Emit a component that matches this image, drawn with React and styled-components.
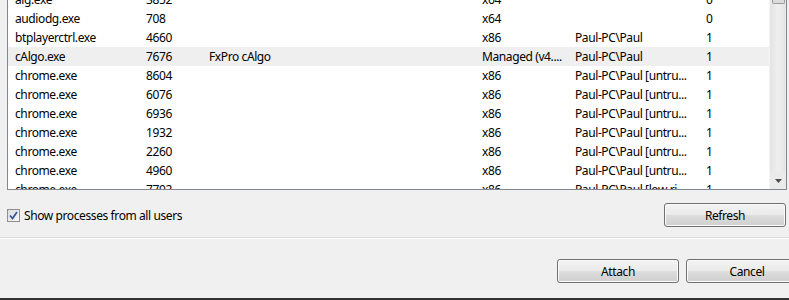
import React from "react";
import styled, { createGlobalStyle } from "styled-components";

const rows = [
  { name: "alg.exe", pid: "3852", title: "", type: "x64", user: "", session: "0" },
  { name: "audiodg.exe", pid: "708", title: "", type: "x64", user: "", session: "0" },
  { name: "btplayerctrl.exe", pid: "4660", title: "", type: "x86", user: "Paul-PC\\Paul", session: "1" },
  { name: "cAlgo.exe", pid: "7676", title: "FxPro cAlgo", type: "Managed (v4....", user: "Paul-PC\\Paul", session: "1", active: true },
  { name: "chrome.exe", pid: "8604", title: "", type: "x86", user: "Paul-PC\\Paul [untru...", session: "1" },
  { name: "chrome.exe", pid: "6076", title: "", type: "x86", user: "Paul-PC\\Paul [untru...", session: "1" },
  { name: "chrome.exe", pid: "6936", title: "", type: "x86", user: "Paul-PC\\Paul [untru...", session: "1" },
  { name: "chrome.exe", pid: "1932", title: "", type: "x86", user: "Paul-PC\\Paul [untru...", session: "1" },
  { name: "chrome.exe", pid: "2260", title: "", type: "x86", user: "Paul-PC\\Paul [untru...", session: "1" },
  { name: "chrome.exe", pid: "4960", title: "", type: "x86", user: "Paul-PC\\Paul [untru...", session: "1" },
  { name: "chrome.exe", pid: "7792", title: "", type: "x86", user: "Paul-PC\\Paul [low ri...", session: "1" },
];

function App() {
  return (
    <>
      <GlobalStyle />
      <Dialog>
        <ListBox>
          <Rows>
            <Scrolled>
              {rows.map((r, i) => (
                <Row key={i} $active={r.active}>
                  <Cell>{r.name}</Cell>
                  <Cell>{r.pid}</Cell>
                  <Cell>{r.title}</Cell>
                  <Cell>{r.type}</Cell>
                  <Cell>{r.user}</Cell>
                  <Cell>{r.session}</Cell>
                </Row>
              ))}
            </Scrolled>
          </Rows>
          <ScrollBar>
            <Thumb />
            <Track />
            <ArrowButton>
              <svg width="7" height="4" viewBox="0 0 7 4">
                <path d="M0 0 H7 L3.5 4 Z" fill="#4d4d4d" />
              </svg>
            </ArrowButton>
          </ScrollBar>
        </ListBox>

        <Options>
          <CheckLabel>
            <CheckBox>
              <svg width="9" height="9" viewBox="0 0 9 9">
                <path d="M1 4.5 L3.5 7.5 L8 1" fill="none" stroke="#3b54a0" strokeWidth="1.8" />
              </svg>
            </CheckBox>
            Show processes from all users
          </CheckLabel>
          <Button>Refresh</Button>
        </Options>

        <Separator />

        <Footer>
          <Button>Attach</Button>
          <Button>Cancel</Button>
        </Footer>
      </Dialog>
    </>
  );
}

const GlobalStyle = createGlobalStyle`
  html, body {
    margin: 0;
    padding: 0;
    background: #f0f0f0;
    overflow: hidden;
  }
  body {
    font-family: "Noto Sans", "Open Sans", sans-serif;
    font-size: 12px;
    letter-spacing: -0.4px;
    color: #000;
  }
`;

const Dialog = styled.div`
  width: 789px;
  height: 300px;
  box-sizing: border-box;
  background: #f0f0f0;
  border-bottom: 2px solid #333;
  display: flex;
  flex-direction: column;
  overflow: hidden;
`;

const ListBox = styled.div`
  height: 190px;
  box-sizing: border-box;
  margin: 0 2px 0 7px;
  border: 1px solid #828790;
  border-top: none;
  background: #fff;
  display: flex;
`;

const Rows = styled.div`
  flex: 1;
  overflow: hidden;
`;

const Scrolled = styled.div`
  margin-top: -10px;
`;

const Row = styled.div`
  display: grid;
  grid-template-columns: 131px 63px 273px 93px 131px 1fr;
  height: 19px;
  line-height: 19px;
  padding-left: 7px;
  background: ${(p) => (p.$active ? "#efefef" : "transparent")};
`;

const Cell = styled.div`
  white-space: nowrap;
  overflow: hidden;
`;

const ScrollBar = styled.div`
  width: 16px;
  background: #eaeaea;
  border-left: 1px solid #f4f4f4;
  display: flex;
  flex-direction: column;
  align-items: center;
`;

const Thumb = styled.div`
  width: 13px;
  height: 4px;
  box-sizing: border-box;
  border: 1px solid #9a9a9a;
  border-top: none;
  border-radius: 0 0 2px 2px;
  background: #dcdcdc;
`;

const Track = styled.div`
  flex: 1;
  width: 100%;
  background: linear-gradient(to right, #e4e4e4, #efefef 50%, #e4e4e4);
`;

const ArrowButton = styled.div`
  height: 17px;
  width: 100%;
  display: flex;
  align-items: center;
  justify-content: center;
  background: #eaeaea;
`;

const Options = styled.div`
  display: flex;
  align-items: center;
  justify-content: space-between;
  margin-top: 13px;
  padding: 0 3px 0 7px;
`;

const CheckLabel = styled.label`
  display: flex;
  align-items: center;
  gap: 4px;
  margin-top: 1px;
`;

const CheckBox = styled.span`
  width: 13px;
  height: 13px;
  box-sizing: border-box;
  border: 1px solid #8e8f8f;
  background: linear-gradient(135deg, #dcdcdc, #f8f8f8);
  display: flex;
  align-items: center;
  justify-content: center;
`;

const Button = styled.button`
  width: 122px;
  height: 24px;
  flex-shrink: 0;
  box-sizing: border-box;
  border: 1px solid #707070;
  border-radius: 3px;
  background: linear-gradient(#f2f2f2 0%, #ebebeb 50%, #dddddd 51%, #cfcfcf 100%);
  box-shadow: inset 0 0 0 1px #fbfbfb;
  font-family: "Noto Sans", "Open Sans", sans-serif;
  font-size: 12px;
  letter-spacing: -0.4px;
  color: #000;
  padding: 0;
`;

const Separator = styled.div`
  margin-top: 10px;
  height: 1px;
  background: #dadada;
  border-bottom: 1px solid #fff;
`;

const Footer = styled.div`
  display: flex;
  justify-content: flex-end;
  gap: 7px;
  margin-top: 20px;
  margin-right: -19px;
`;

export default App;
